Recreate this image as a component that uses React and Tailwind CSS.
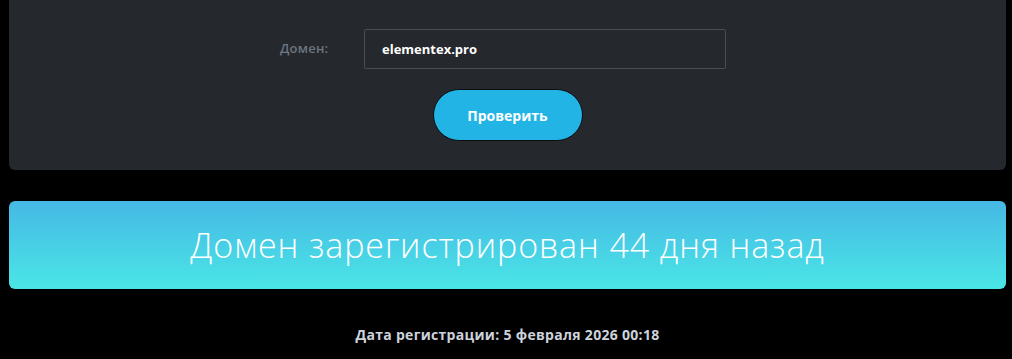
export default function App() {
    return (
        <main className="min-h-[359px] bg-black pl-[9px] pr-[6px] pb-4" style={{ fontFamily: '"Open Sans", "Noto Sans", sans-serif' }}>
            <div className="bg-[#25282d] rounded-b-md h-[170px] flex flex-col items-center pt-[29px]">
                <div className="flex items-center pr-[9px]">
                    <label className="w-[84px] text-[13px] font-semibold tracking-[0.2px] text-[#6c7580]">Домен:</label>
                    <input
                        className="w-[362px] h-[40px] border border-[#494d54] rounded-[2px] bg-transparent px-[17px] text-[13px] font-bold text-white outline-none"
                        defaultValue="elementex.pro"
                    />
                </div>
                <button className="mt-[20px] w-[150px] h-[52px] rounded-full bg-[#23b4e6] border border-[#0b0d10] text-white text-[14px] font-bold">
                    Проверить
                </button>
            </div>
            <div className="mt-[31px] h-[88px] rounded-md bg-gradient-to-b from-[#46b8e4] to-[#4ae6e6] flex items-center justify-center">
                <span className="text-white text-[34px] font-light tracking-[0.9px]">Домен зарегистрирован 44 дня назад</span>
            </div>
            <p className="mt-[35px] text-center text-[14px] font-bold tracking-[0.3px] text-[#cdd3dc]">Дата регистрации: 5 февраля 2026 00:18</p>
        </main>
    );
}
